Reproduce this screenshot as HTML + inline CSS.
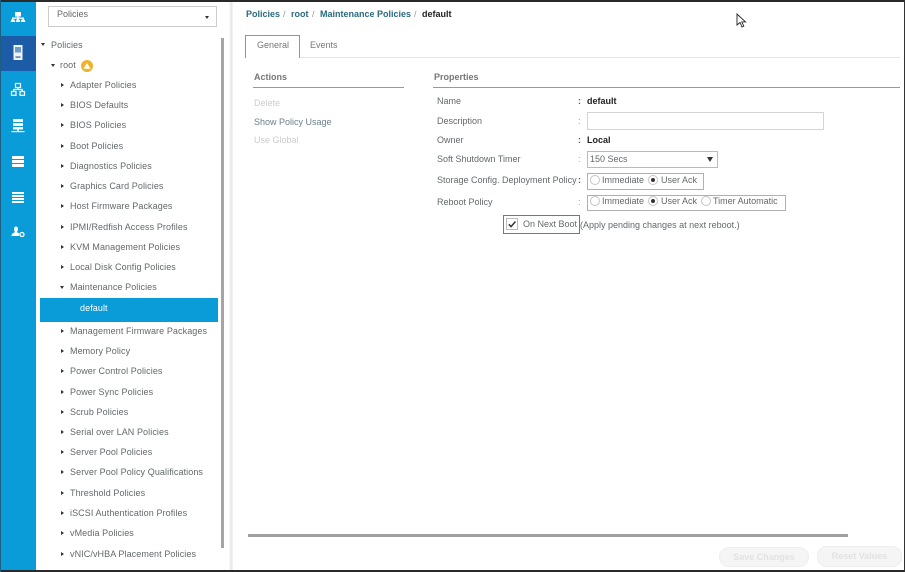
<!DOCTYPE html>
<html><head><meta charset="utf-8"><style>
html,body{margin:0;padding:0;background:#fff}
#p{position:relative;width:905px;height:572px;overflow:hidden;background:#fff;font-family:"Liberation Sans",sans-serif;font-size:9px;color:#555}
#f{position:absolute;left:0;top:0;width:905px;height:572px;filter:blur(.35px)}
#p div{position:absolute;white-space:nowrap}
.t{left:70px;color:#63686a;font-size:9px;line-height:12px;letter-spacing:.09px}
.c{left:61px;width:0;height:0;border-left:3px solid #333;border-top:2.500px solid transparent;border-bottom:2.500px solid transparent}
.o{width:0;height:0;border-top:3px solid #333;border-left:2.500px solid transparent;border-right:2.500px solid transparent}
.l{left:437px;color:#63686a;line-height:12px}
.k{left:578px;color:#555;line-height:12px;font-weight:bold}
.g{color:#999;font-weight:normal}
.r{width:10px;height:10px;box-sizing:border-box;border:1px solid #c4c4c4;border-radius:50%;background:#fff}
.v{color:#63686a;line-height:12px}
.rd{width:4px;height:4px;border-radius:50%;background:#333}
.b{border:1px solid #b0b0b0;box-sizing:border-box}
</style></head><body><div id="p"><div id="f">
<div style="left:0;top:0;width:36px;height:572px;background:#0a9cd8"></div>
<div style="left:0;top:36px;width:36px;height:35px;background:#1c5ca6"></div>
<div style="left:229px;top:0;width:4px;height:572px;background:linear-gradient(to right,#fff,#e6e6e6 50%,#f6f6f6)"></div>

<svg style="position:absolute;left:0;top:0" width="36" height="250" fill="none">
<g fill="#fff"><rect x="15" y="12" width="6" height="4.500"/><rect x="12" y="17.500" width="12" height="1.300"/><rect x="12" y="17.500" width="1.300" height="3"/><rect x="17.300" y="16" width="1.300" height="5"/><rect x="22.700" y="17.500" width="1.300" height="3"/><path d="M11.500 19.500h3l.8 2.500h-4.800zM16.500 19.500h3l.6 2.500h-4.200zM21.500 19.500h3l1 2.500h-4.800z"/></g>
<rect x="13.500" y="45" width="9" height="15" fill="#eef3f8"/><rect x="15" y="47" width="6" height="5.500" fill="#6f9ac8"/><rect x="15.500" y="56.500" width="5" height="1.200" fill="#3a5a80"/>
<g stroke="#fff" stroke-width="1.200"><rect x="15.500" y="83.500" width="5" height="4"/><rect x="11.500" y="91.500" width="4.500" height="3.800"/><rect x="20" y="91.500" width="4.500" height="3.800"/><path d="M18 87.500v2M13.800 91.500v-2h8.400v2"/></g>
<g fill="#fff"><rect x="13" y="119" width="10" height="3"/><rect x="13" y="123" width="10" height="3"/><rect x="13" y="127" width="10" height="2.500"/><rect x="17.300" y="129" width="1.500" height="2.500"/><rect x="11.500" y="131" width="13" height="1.200"/></g>
<g fill="#fff"><rect x="12" y="156" width="12" height="3" rx=".6"/><rect x="12" y="160" width="12" height="3" rx=".6"/><rect x="12" y="164" width="12" height="3" rx=".6"/></g>
<g fill="#fff"><rect x="12" y="192" width="12" height="2"/><rect x="12" y="195" width="12" height="2"/><rect x="12" y="198" width="12" height="2"/><rect x="12" y="201" width="12" height="2"/></g>
<path d="M16 226.500c1.400 0 2 1 2 2.500 0 1-.4 1.800-.8 2.400v1c1 .4 1.600.7 2 1.100v2.500h-7.700c.1-2 1.300-3.100 3.200-3.600v-1c-.4-.6-.7-1.400-.7-2.400 0-1.500.6-2.500 2-2.500z" fill="#fff"/><circle cx="22" cy="234.500" r="2" stroke="#fff" stroke-width="1.300"/>
</svg>

<div class="b" style="left:48px;top:6px;width:169px;height:21px;background:#fff;border-color:#ccc"></div>
<div style="left:57px;top:8px;line-height:12px;color:#666">Policies</div>
<div class="o" style="left:205px;top:16px"></div>
<div style="left:221px;top:38px;width:3px;height:510px;background:#a5a5a5"></div>

<div class="o" style="left:41px;top:43px"></div><div class="t" style="left:51px;top:39px">Policies</div>
<div class="o" style="left:51px;top:64px"></div><div class="t" style="left:60px;top:59px">root</div>
<div style="left:81px;top:60px;width:12px;height:12px;border-radius:50%;background:#eeb32a"></div>
<svg style="position:absolute;left:83px;top:62px" width="8" height="8"><path d="M4 1L7.500 6.800H.5z" fill="#fff"/></svg>

<div class="c" style="top:82.500px"></div><div class="t" style="top:79px">Adapter Policies</div>
<div class="c" style="top:102.500px"></div><div class="t" style="top:99px">BIOS Defaults</div>
<div class="c" style="top:122.500px"></div><div class="t" style="top:119px">BIOS Policies</div>
<div class="c" style="top:143.500px"></div><div class="t" style="top:140px">Boot Policies</div>
<div class="c" style="top:163.500px"></div><div class="t" style="top:160px">Diagnostics Policies</div>
<div class="c" style="top:183.500px"></div><div class="t" style="top:180px">Graphics Card Policies</div>
<div class="c" style="top:203.500px"></div><div class="t" style="top:200px">Host Firmware Packages</div>
<div class="c" style="top:224.500px"></div><div class="t" style="top:221px">IPMI/Redfish Access Profiles</div>
<div class="c" style="top:244.500px"></div><div class="t" style="top:241px">KVM Management Policies</div>
<div class="c" style="top:264.500px"></div><div class="t" style="top:261px">Local Disk Config Policies</div>
<div class="o" style="left:60px;top:286px"></div><div class="t" style="top:281px">Maintenance Policies</div>
<div style="left:40px;top:298px;width:178px;height:24px;background:#0a9cd8"></div>
<div class="t" style="left:80px;top:302px;color:#fff">default</div>
<div class="c" style="top:328.500px"></div><div class="t" style="top:325px">Management Firmware Packages</div>
<div class="c" style="top:348.500px"></div><div class="t" style="top:345px">Memory Policy</div>
<div class="c" style="top:368.500px"></div><div class="t" style="top:365px">Power Control Policies</div>
<div class="c" style="top:389.500px"></div><div class="t" style="top:386px">Power Sync Policies</div>
<div class="c" style="top:409.500px"></div><div class="t" style="top:406px">Scrub Policies</div>
<div class="c" style="top:429.500px"></div><div class="t" style="top:426px">Serial over LAN Policies</div>
<div class="c" style="top:449.500px"></div><div class="t" style="top:446px">Server Pool Policies</div>
<div class="c" style="top:469.500px"></div><div class="t" style="top:466px">Server Pool Policy Qualifications</div>
<div class="c" style="top:490.500px"></div><div class="t" style="top:487px">Threshold Policies</div>
<div class="c" style="top:510.500px"></div><div class="t" style="top:507px">iSCSI Authentication Profiles</div>
<div class="c" style="top:530.500px"></div><div class="t" style="top:527px">vMedia Policies</div>
<div class="c" style="top:551.500px"></div><div class="t" style="top:548px">vNIC/vHBA Placement Policies</div>

<div style="left:246px;top:8px;line-height:12px;font-weight:bold;color:#2b6a80">Policies</div>
<div style="left:283px;top:8px;line-height:12px;color:#999">/</div>
<div style="left:291px;top:8px;line-height:12px;font-weight:bold;color:#2b6a80">root</div>
<div style="left:312px;top:8px;line-height:12px;color:#999">/</div>
<div style="left:320px;top:8px;line-height:12px;font-weight:bold;color:#2b6a80">Maintenance Policies</div>
<div style="left:414px;top:8px;line-height:12px;color:#999">/</div>
<div style="left:422px;top:8px;line-height:12px;font-weight:bold;color:#222">default</div>

<div style="left:245px;top:57px;width:655px;height:1px;background:#e6e6e6"></div>
<div style="left:245px;top:35px;width:55px;height:23px;box-sizing:border-box;border:1px solid #45b0cf;border-bottom:0;background:#fff"></div>
<div style="left:257px;top:39px;line-height:12px;color:#777">General</div>
<div style="left:310px;top:39px;line-height:12px;color:#777">Events</div>

<div style="left:254px;top:71px;line-height:12px;font-weight:bold;color:#777">Actions</div>
<div style="left:253px;top:87px;width:151px;height:1px;background:#999"></div>
<div style="left:254px;top:97px;line-height:12px;color:#ccc">Delete</div>
<div style="left:254px;top:116px;line-height:12px;color:#6a808a">Show Policy Usage</div>
<div style="left:254px;top:134px;line-height:12px;color:#ccc">Use Global</div>

<div style="left:434px;top:71px;line-height:12px;font-weight:bold;color:#777">Properties</div>
<div style="left:433px;top:87px;width:467px;height:1px;background:#999"></div>

<div class="l" style="top:95px">Name</div><div class="k" style="top:95px">:</div><div class="v" style="left:587px;top:95px;font-weight:bold;color:#222">default</div>
<div class="l" style="top:115px">Description</div><div class="k g" style="top:115px">:</div>
<div style="left:587px;top:112px;width:237px;height:18px;box-sizing:border-box;border:1px solid #d4d4d4"></div>
<div class="l" style="top:134px">Owner</div><div class="k" style="top:134px">:</div><div class="v" style="left:587px;top:134px;font-weight:bold;color:#222">Local</div>
<div class="l" style="top:153px">Soft Shutdown Timer</div><div class="k g" style="top:153px">:</div>
<div style="left:587px;top:151px;width:131px;height:17px;box-sizing:border-box;border:1px solid #bbb"></div>
<div class="v" style="left:590px;top:153px">150 Secs</div>
<div class="o" style="left:707px;top:157px;border-top-width:5px;border-left-width:3.500px;border-right-width:3.500px"></div>

<div class="l" style="top:174px">Storage Config. Deployment Policy</div><div class="k" style="top:174px">:</div>
<div class="b" style="left:587px;top:173px;width:117px;height:17px"></div>
<div class="r" style="left:590px;top:175px"></div><div class="v" style="left:602px;top:174px">Immediate</div>
<div class="r" style="left:648px;top:175px"></div><div class="rd" style="left:651px;top:178px"></div><div class="v" style="left:661px;top:174px">User Ack</div>

<div class="l" style="top:196px">Reboot Policy</div><div class="k g" style="top:196px">:</div>
<div class="b" style="left:587px;top:195px;width:199px;height:16px"></div>
<div class="r" style="left:590px;top:196px"></div><div class="v" style="left:602px;top:195px">Immediate</div>
<div class="r" style="left:648px;top:196px"></div><div class="rd" style="left:651px;top:199px"></div><div class="v" style="left:661px;top:195px">User Ack</div>
<div class="r" style="left:701px;top:196px"></div><div class="v" style="left:713px;top:195px">Timer Automatic</div>

<div class="b" style="left:503px;top:215px;width:77px;height:19px;border-color:#777"></div>
<div style="left:506px;top:218px;width:12px;height:12px;box-sizing:border-box;border:1px solid #bbb"></div>
<svg style="position:absolute;left:506px;top:218px" width="12" height="12" fill="none"><path d="M2.800 6.300L5 8.600 9.500 3.500" stroke="#333" stroke-width="1.500"/></svg>
<div class="v" style="left:523px;top:218px">On Next Boot</div>
<div class="v" style="left:580px;top:219px">(Apply pending changes at next reboot.)</div>

<div style="left:248px;top:534px;width:600px;height:3px;background:#a0a0a0"></div>
<div style="left:719px;top:547px;width:90px;height:20px;box-sizing:border-box;border-radius:10px;background:#f5f5f5;border:1px solid #eee;text-align:center;line-height:18px;font-weight:bold;color:#e2e2e2">Save Changes</div>
<div style="left:817px;top:546px;width:85px;height:21px;box-sizing:border-box;border-radius:10px;background:#f5f5f5;border:1px solid #eee;text-align:center;line-height:19px;font-weight:bold;color:#e2e2e2">Reset Values</div>

<svg style="position:absolute;left:736px;top:13px" width="12" height="16"><path d="M1 1v11l3-2.500 2 4.500 1.800-.8-2-4.300h3.700z" fill="#fff" stroke="#222" stroke-width=".9"/></svg>
</div>
<div style="left:0;top:0;width:905px;height:2px;background:#2a2a2a"></div>
<div style="left:0;top:570px;width:905px;height:2px;background:#2a2a2a"></div>
<div style="left:0;top:0;width:1px;height:572px;background:#1c5f85"></div>
<div style="left:904px;top:0;width:1px;height:572px;background:#333"></div>
</div></body></html>
